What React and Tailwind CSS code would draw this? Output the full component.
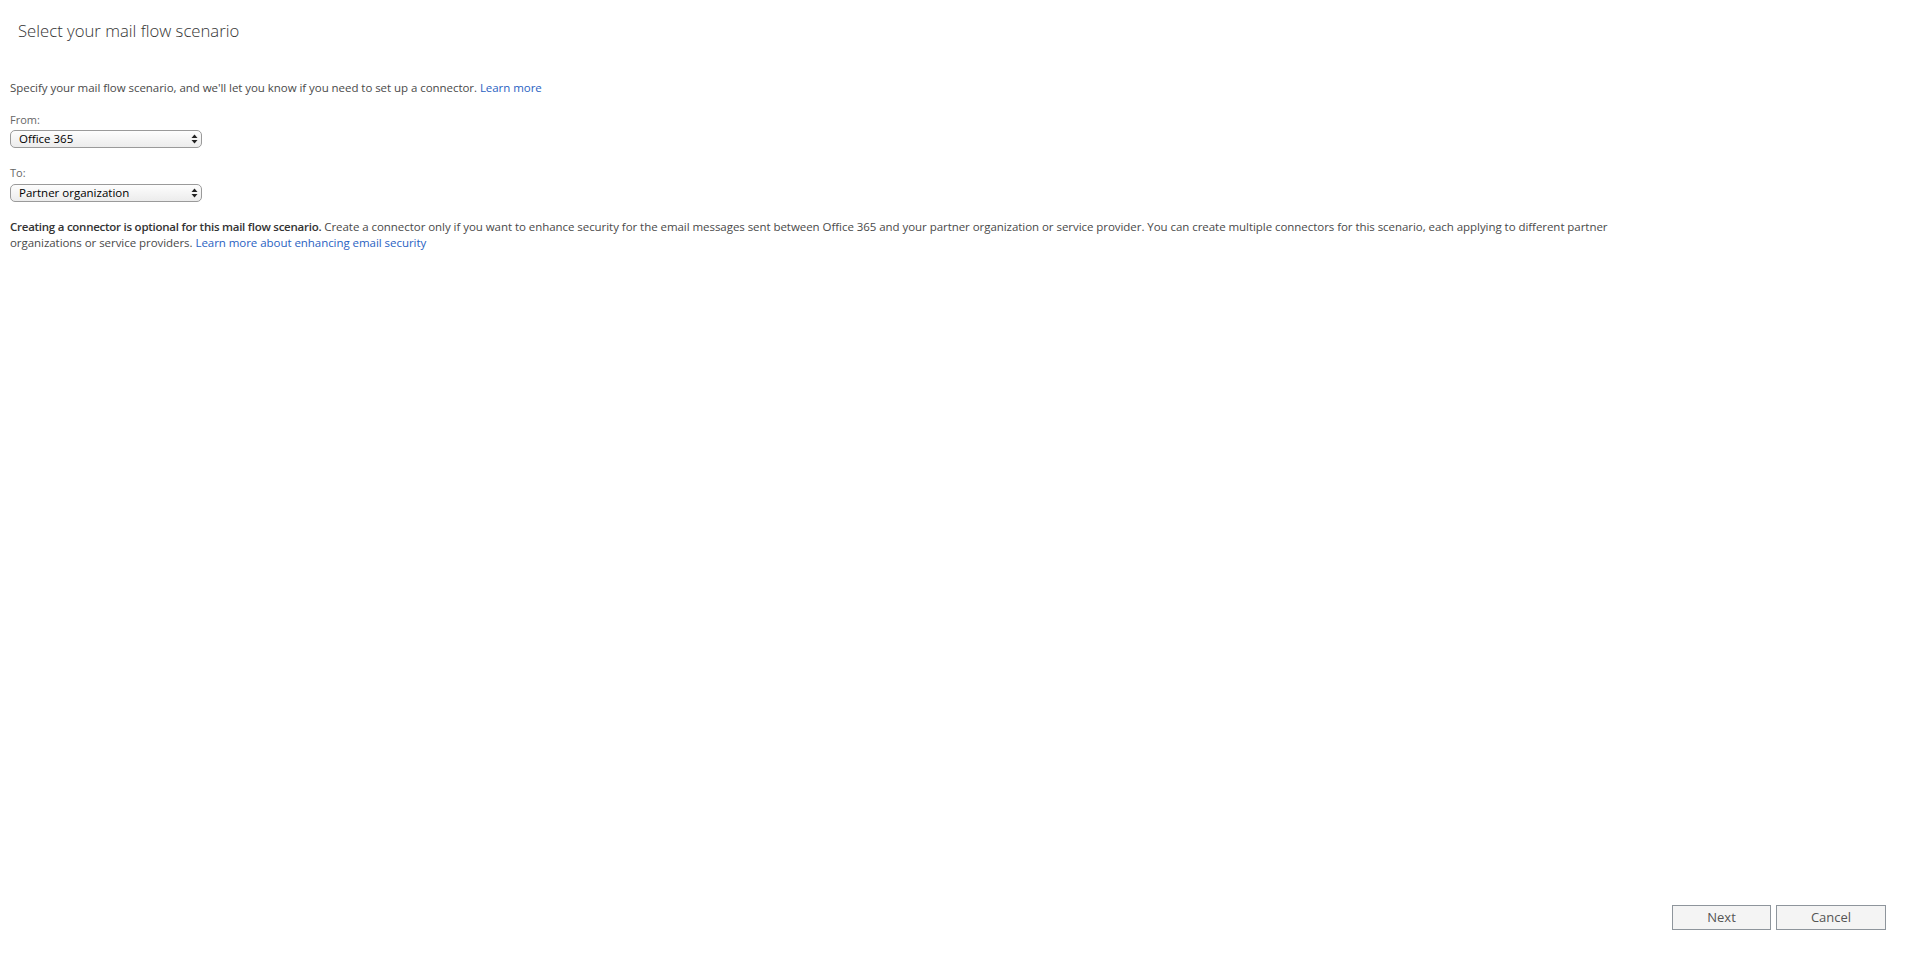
import React, { useState } from 'react';

const font = { fontFamily: '"Open Sans", "Noto Sans", Arial, sans-serif' };

const SelectBox = ({ value, options, onChange }) => (
  <div className="relative w-[192px] h-[18px]">
    <select
      value={value}
      onChange={(e) => onChange(e.target.value)}
      className="block appearance-none w-full h-[18px] border border-[#9a9a9a] rounded-[5px] bg-gradient-to-b from-[#fdfdfd] to-[#ececec] pl-[8px] pr-5 py-0 text-[11.5px] leading-[16px] text-black outline-none"
    >
      {options.map((o) => (
        <option key={o}>{o}</option>
      ))}
    </select>
    <div className="absolute inset-y-0 right-[4px] flex items-center pointer-events-none">
      <svg width="7" height="10" viewBox="0 0 7 10">
        <path d="M3.5 0.5 L6.5 4 L0.5 4 Z" fill="#222" />
        <path d="M3.5 9.5 L6.5 6 L0.5 6 Z" fill="#222" />
      </svg>
    </div>
  </div>
);

export default function App() {
  const [from, setFrom] = useState('Office 365');
  const [to, setTo] = useState('Partner organization');

  return (
    <div className="h-[959px] flex flex-col bg-white text-[#4a4a4a]" style={font}>
      {/* Header */}
      <h1 className="mt-[19px] ml-[18px] text-[16.7px] leading-[24px] font-light text-[#333]">
        Select your mail flow scenario
      </h1>

      <div className="pl-[10px] text-[11.5px] leading-[16px]">
        <p className="mt-[37px] tracking-[-0.05px]">
          Specify your mail flow scenario, and we'll let you know if you need to set up a connector.{' '}
          <a href="#" className="text-[#2a62c2]">Learn more</a>
        </p>

        <div className="mt-[17px] text-[11px] leading-[14px] text-[#666]">From:</div>
        <div className="mt-[3px]">
          <SelectBox value={from} onChange={setFrom} options={['Office 365', "Your organization's email server", 'Partner organization', 'Internet']} />
        </div>

        <div className="mt-[18px] text-[11px] leading-[14px] text-[#666]">To:</div>
        <div className="mt-[4px]">
          <SelectBox value={to} onChange={setTo} options={['Partner organization', 'Office 365', "Your organization's email server", 'Internet']} />
        </div>

        <p className="mt-[17px] w-[1640px] tracking-[-0.05px]">
          <span className="font-semibold text-[#333] tracking-[-0.25px]">Creating a connector is optional for this mail flow scenario.</span>{' '}
          Create a connector only if you want to enhance security for the email messages sent between Office 365 and your partner organization or service provider. You can create multiple connectors for this scenario, each applying to different partner organizations or service providers.{' '}
          <a href="#" className="text-[#2a62c2]">Learn more about enhancing email security</a>
        </p>
      </div>

      {/* Footer buttons */}
      <div className="mt-auto mb-[29px] mr-[27px] flex justify-end gap-[5px]">
        <button className="w-[99px] h-[25px] border border-[#8e959c] bg-[#f4f4f4] text-[13px] text-[#555]">Next</button>
        <button className="w-[110px] h-[25px] border border-[#8e959c] bg-[#f4f4f4] text-[13px] text-[#555]">Cancel</button>
      </div>
    </div>
  );
}
